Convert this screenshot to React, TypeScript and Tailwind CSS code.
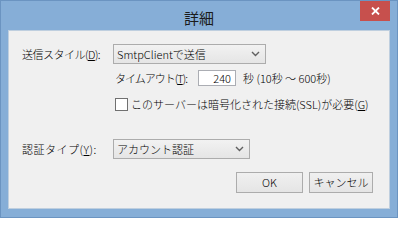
import type { ReactNode } from 'react';

const font = { fontFamily: '"Meiryo UI", "Noto Sans CJK JP", sans-serif' };

function Chevron() {
  return (
    <svg width="9" height="6" viewBox="0 0 9 6" className="shrink-0">
      <path d="M1 1 L4.5 4.5 L8 1" fill="none" stroke="#606060" strokeWidth="1.4" />
    </svg>
  );
}

function Combo({ value, width }: { value: string; width: string }) {
  return (
    <div
      className={`${width} h-[20px] flex items-center justify-between pl-[3px] pr-[5px] border border-[#acacac] bg-gradient-to-b from-[#f2f2f2] to-[#e5e5e5] whitespace-nowrap`}
    >
      <span>{value}</span>
      <Chevron />
    </div>
  );
}

function Btn({ children, width }: { children: ReactNode; width: string }) {
  return (
    <div
      className={`${width} h-[21px] flex items-center justify-center border border-[#acacac] bg-gradient-to-b from-[#f0f0f0] to-[#e5e5e5] whitespace-nowrap`}
    >
      {children}
    </div>
  );
}

export default function App() {
  return (
    <div
      className="w-[398px] h-[218px] bg-[#86aed7] border border-[#6b94c1] flex flex-col text-black font-light"
      style={font}
    >
      {/* タイトルバー */}
      <div className="relative h-[29px] flex items-center justify-center">
        <span className="text-[15px] font-normal text-[#1b1b1b] leading-none mt-[3px]">詳細</span>
        <div className="absolute right-[7px] top-0 w-[30px] h-[20px] bg-[#c7504d] flex items-center justify-center">
          <svg width="9" height="8" viewBox="0 0 9 8">
            <path d="M1 0.5 L8 7.5 M8 0.5 L1 7.5" stroke="#fff" strokeWidth="1.8" />
          </svg>
        </div>
      </div>

      {/* クライアント領域 */}
      <div className="mx-[7px] h-[179px] bg-[#f0f0f0] border border-[#bfcfdf] pl-[13px] pt-[13px] text-[11px] leading-none whitespace-nowrap">
        <div className="flex items-center h-[20px]">
          <span className="w-[91px] tracking-[-0.5px]">
            送信スタイル(<u>D</u>):
          </span>
          <Combo value="SmtpClientで送信" width="w-[153px]" />
        </div>

        <div className="flex items-center h-[16px] mt-[6px] pl-[93px]">
          <span className="w-[83px] tracking-[-1px]">
            タイムアウト(<u>T</u>):
          </span>
          <div className="w-[38px] h-[16px] border border-[#abadb3] bg-white flex items-center justify-end pr-[4px]">
            240
          </div>
          <span className="ml-[7px]">秒 (10秒 ～ 600秒)</span>
        </div>

        <div className="flex items-center h-[13px] mt-[12px] pl-[93px]">
          <div className="w-[13px] h-[13px] shrink-0 border border-[#707070] bg-white" />
          <span className="ml-[3px]">
            このサーバーは暗号化された接続(SSL)が必要(<u>G</u>)
          </span>
        </div>

        <div className="flex items-center h-[20px] mt-[28px]">
          <span className="w-[91px] tracking-[0.5px]">
            認証タイプ(<u>Y</u>):
          </span>
          <Combo value="アカウント認証" width="w-[137px]" />
        </div>

        <div className="flex justify-end gap-[6px] mt-[13px] pr-[16px]">
          <Btn width="w-[67px]">OK</Btn>
          <Btn width="w-[64px]">キャンセル</Btn>
        </div>
      </div>
    </div>
  );
}
